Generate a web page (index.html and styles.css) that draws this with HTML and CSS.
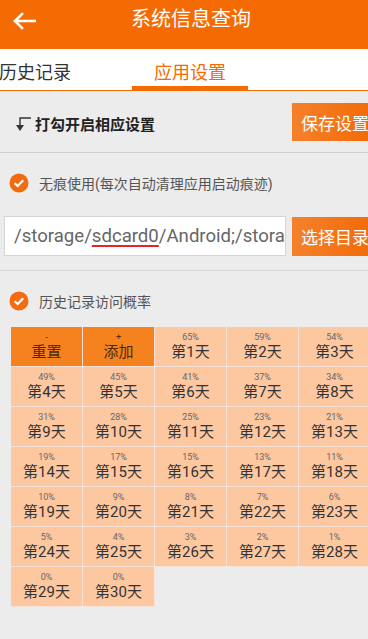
FILE: index.html
```html
<!DOCTYPE html>
<html lang="zh-CN">
<head>
    <title>系统信息查询</title>
    <meta charset="UTF-8" />
    <meta name="viewport" content="width=device-width" />
    <link rel="stylesheet" href="styles.css">
</head>
<body>
    <header class="topbar">
        <svg class="back" width="24" height="18" viewBox="0 0 24 18">
            <path d="M23 9 H3 M10 2 L3 9 L10 16" fill="none" stroke="#fff" stroke-width="2.6" stroke-linecap="square" />
        </svg>
        <h1>系统信息查询</h1>
    </header>

    <nav class="tabs">
        <div class="tab">历史记录</div>
        <div class="tab active">应用设置</div>
    </nav>

    <main>
        <div class="hint-row">
            <div class="hint">
                <svg width="18" height="16" viewBox="0 0 18 16">
                    <path d="M17 2 H6 V10" fill="none" stroke="#333" stroke-width="1.4" />
                    <path d="M2 9 H10 L6 15 Z" fill="#333" />
                </svg>
                打勾开启相应设置
            </div>
            <button class="btn">保存设置</button>
        </div>

        <section class="option">
            <label class="check">
                <svg width="20" height="20" viewBox="0 0 20 20">
                    <circle cx="10" cy="10" r="9.5" fill="#f26b11" />
                    <path d="M5.6 10.2 L8.7 13 L14.2 7.2" fill="none" stroke="#fff" stroke-width="2.2" />
                </svg>
                无痕使用(每次自动清理应用启动痕迹)
            </label>
            <div class="path-row">
                <div class="path-box">/storage/<span class="typo">sdcard0</span>/Android;/stora</div>
                <button class="btn">选择目录</button>
            </div>
        </section>

        <section class="option last">
            <label class="check">
                <svg width="20" height="20" viewBox="0 0 20 20">
                    <circle cx="10" cy="10" r="9.5" fill="#f26b11" />
                    <path d="M5.6 10.2 L8.7 13 L14.2 7.2" fill="none" stroke="#fff" stroke-width="2.2" />
                </svg>
                历史记录访问概率
            </label>
            <div class="days" id="days"></div>
        </section>
    </main>

    <script>
        const days = document.getElementById('days');
        const rates = [65, 59, 54, 49, 45, 41, 37, 34, 31, 28, 25, 23, 21, 19, 17, 15, 13, 11,
            10, 9, 8, 7, 6, 5, 4, 3, 2, 1, 0, 0];

        // the two action cells come first
        const actions = [['-', '重置'], ['+', '添加']];
        actions.forEach(a => {
            const cell = document.createElement('div');
            cell.className = 'day action';
            cell.innerHTML = `<span class="rate">${a[0]}</span><span class="name">${a[1]}</span>`;
            days.appendChild(cell);
        });

        rates.forEach((rate, i) => {
            const cell = document.createElement('div');
            cell.className = 'day';
            cell.innerHTML = `<span class="rate">${rate}%</span><span class="name">第${i + 1}天</span>`;
            days.appendChild(cell);
        });
    </script>
</body>
</html>
```

FILE: styles.css
```css
html, body {
    overflow: hidden;
}
body {
    margin: 0;
    width: 368px;
    min-height: 639px;
    background: #ececec;
    font-family: Roboto, "Noto Sans CJK SC", sans-serif;
    color: #333;
}
.topbar {
    position: relative;
    height: 49px;
    background: #f46b04;
    display: flex;
    justify-content: center;
}
.topbar .back {
    position: absolute;
    left: 12px;
    top: 12px;
}
.topbar h1 {
    margin: 0;
    padding: 6px 0 0 14px;
    font-size: 20px;
    font-weight: normal;
    color: #fff;
    line-height: 26px;
}
.tabs {
    display: flex;
    height: 41px;
    background: #fff;
    border-bottom: 1.5px solid #f46b04;
}
.tab {
    width: 133px;
    margin-left: -1px;
    font-size: 18px;
    line-height: 48px;
    color: #333;
}
.tab.active {
    width: 116px;
    margin-left: 0;
    text-align: center;
    color: #f46b04;
    border-bottom: 4px solid #f46b04;
    box-sizing: border-box;
    height: 41px;
}
.hint-row {
    display: flex;
    align-items: center;
    justify-content: space-between;
    height: 61px;
    border-bottom: 1px solid #cfcfcf;
}
.hint {
    display: flex;
    align-items: center;
    gap: 3px;
    padding-left: 14px;
    font-size: 15px;
    font-weight: bold;
    color: #222;
    padding-top: 4px;
}
.btn {
    width: 82px;
    height: 38px;
    margin-right: -6px;
    border: 0;
    padding: 0 0 0 9px;
    text-align: left;
    background: linear-gradient(to right, #f5812c, #f26a06);
    color: #fff;
    font-family: Roboto, "Noto Sans CJK SC", sans-serif;
    font-size: 17px;
}
.hint-row .btn {
    margin-top: 1px;
}
.option {
    padding: 20px 0 14px;
    border-bottom: 1px solid #d6d6d6;
}
.option.last {
    border-bottom: 0;
    padding-top: 20px;
}
.check {
    display: flex;
    align-items: center;
    gap: 10px;
    padding-left: 9px;
    height: 20px;
    font-size: 14px;
    color: #555;
}
.path-row {
    display: flex;
    align-items: center;
    gap: 6px;
    margin-top: 23px;
    padding-left: 4px;
}
.path-box {
    width: 282px;
    height: 40px;
    box-sizing: border-box;
    background: #fff;
    border: 1px solid #d4d4d4;
    padding-left: 9px;
    font-size: 18.6px;
    line-height: 38px;
    color: #666;
    white-space: nowrap;
    overflow: hidden;
}
.path-row .btn {
    height: 39px;
}
.typo {
    text-decoration: underline;
    text-decoration-color: #e3262e;
    text-decoration-thickness: 1.5px;
    text-underline-offset: 3px;
}
.days {
    display: grid;
    grid-template-columns: repeat(5, 71px);
    grid-auto-rows: 39px;
    gap: 1px;
    margin: 16px 0 0 11px;
    width: 362px;
}
.day {
    display: flex;
    flex-direction: column;
    align-items: center;
    justify-content: center;
    background: #fdc8a0;
    box-shadow: 1px 1px 0 #f6e2d6;
}
.day.action {
    background: #f5821f;
}
.rate {
    font-size: 9px;
    line-height: 11px;
    color: #666;
}
.name {
    font-size: 15px;
    line-height: 18px;
    color: #333;
}
.day.action .rate,
.day.action .name {
    color: #4a2a0c;
}
```
